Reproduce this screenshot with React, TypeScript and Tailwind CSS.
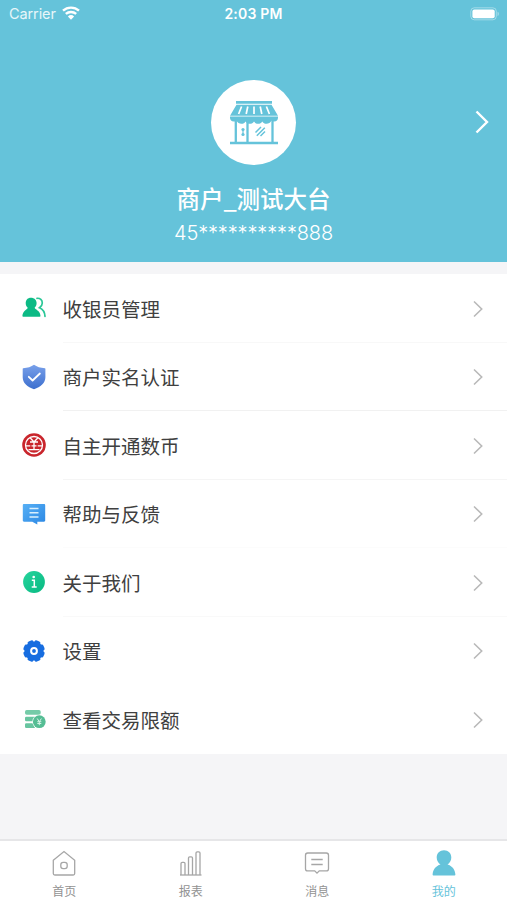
import type { ReactNode } from 'react';

const CashierIcon = () => (
  <svg viewBox="0 0 24 24" className="size-6">
    <path
      d="M8.900 1.700c3.300 0 5.700 2.200 5.700 5.300 0 2-.7 3.700-2 4.800.2 1.600 5.600 2.700 5.900 8.200 0 .5-.3.800-.8.800H1.200c-.5 0-.8-.3-.8-.8.2-5.200 5.100-6.500 5.300-8.200-1.300-1.100-2-2.800-2-4.800 0-3.100 2.100-5.300 5.200-5.300Z"
      fill="#0cba85"
    />
    <path
      d="M15 2.300c3.100-.3 5.300 1.700 5.300 4.700 0 1.900-1.200 3.600-2.800 4.700 3.600 1.500 5.300 4.500 5.500 8.700"
      fill="none"
      stroke="#2bc797"
      strokeWidth="1.700"
      strokeLinecap="round"
    />
  </svg>
);

const ShieldIcon = () => (
  <svg viewBox="0 0 24 26" className="h-[26px] w-6">
    <defs>
      <linearGradient id="shield" x1="0" y1="0" x2="0" y2="1">
        <stop offset="0" stopColor="#78a0ea" />
        <stop offset="1" stopColor="#3d6fce" />
      </linearGradient>
    </defs>
    <path
      d="M12 .8c2.800 2 6.500 3.300 10.900 3.400.3 0 .5.3.5.6v8.500c0 5.700-4.800 9.700-11.400 12C5.400 23 .7 19 .7 13.300V4.800c0-.3.2-.6.5-.6C5.500 4.100 9.200 2.800 12 .8Z"
      fill="url(#shield)"
    />
    <path
      d="m6.800 12.800 3.800 3.700 7.300-7"
      fill="none"
      stroke="#fff"
      strokeWidth="1.800"
      strokeLinecap="round"
      strokeLinejoin="round"
    />
  </svg>
);

const CoinIcon = () => (
  <svg viewBox="0 0 24 24" className="size-6" fill="none" stroke="#fff" strokeWidth="1.300">
    <circle cx="12" cy="12" r="11.800" fill="#c9252c" stroke="none" />
    <circle cx="12" cy="12" r="8.500" />
    <path d="m8.300 5 3.700 4 3.700-4M8 9h8M3.800 12.800h4.500M15.700 12.800h4.500M9.500 12.800h5M12 9v7.500M6.500 16.700h11" />
  </svg>
);

const FeedbackIcon = () => (
  <svg viewBox="0 0 24 24" className="size-6">
    <defs>
      <linearGradient id="feedback" x1="0" y1="0" x2="1" y2="1">
        <stop offset="0" stopColor="#57b0f5" />
        <stop offset="1" stopColor="#2b87e4" />
      </linearGradient>
    </defs>
    <path
      d="M2 2h20c.7 0 1.200.5 1.200 1.200v15.300c0 .7-.5 1.200-1.200 1.200h-6.700v2.700l-5-2.700H2c-.7 0-1.200-.5-1.200-1.200V3.200C.8 2.500 1.300 2 2 2Z"
      fill="url(#feedback)"
    />
    <path d="M7.500 6.500h9M7.500 10.700h9M7.500 15h9" stroke="#d9effd" strokeWidth="1.600" />
  </svg>
);

const AboutIcon = () => (
  <svg viewBox="0 0 24 24" className="size-6">
    <defs>
      <linearGradient id="about" x1="0" y1="0" x2="1" y2="1">
        <stop offset="0" stopColor="#26d49c" />
        <stop offset="1" stopColor="#08b982" />
      </linearGradient>
    </defs>
    <circle cx="12" cy="12" r="10.900" fill="url(#about)" />
    <circle cx="11.700" cy="7" r="1.300" fill="#fff" />
    <path d="M9.800 10.300h2.500v6.500M9.700 17h5" fill="none" stroke="#fff" strokeWidth="1.500" />
  </svg>
);

// each bar spans the whole gear, so four of them give eight teeth
const SettingsIcon = () => (
  <svg viewBox="0 0 24 24" className="size-6" fill="#176de0">
    <circle cx="12" cy="12" r="9.500" />
    {[22.5, 67.5, 112.5, 157.5].map((angle) => (
      <rect
        key={angle}
        x="8.900"
        y="1.200"
        width="6.200"
        height="21.600"
        rx="1.800"
        transform={`rotate(${angle} 12 12)`}
      />
    ))}
    <circle cx="12" cy="12" r="2.900" stroke="#fff" strokeWidth="2" />
  </svg>
);

const LimitIcon = () => (
  <svg viewBox="0 0 24 24" className="size-6">
    <rect x="3" y="3" width="15.700" height="4.800" rx="1.700" fill="#75cba8" />
    <path d="M4.200 9.700h9.300L11 14.200H4.200A1.200 1.200 0 0 1 3 13v-2.100a1.200 1.200 0 0 1 1.200-1.200Z" fill="#68c5a0" />
    <path d="M4.200 16.200H11l2 4.800H4.200A1.200 1.200 0 0 1 3 19.800v-2.400a1.200 1.200 0 0 1 1.200-1.200Z" fill="#68c5a0" />
    <circle cx="17.300" cy="14.700" r="7" fill="#fff" />
    <circle cx="17.300" cy="14.700" r="6.400" fill="#55bd94" />
    <path
      d="m15.200 11.500 2.100 3.200 2.100-3.200M17.300 14.700v3.500M15.300 14.700h4M15.300 16.500h4"
      fill="none"
      stroke="#d7f2e7"
      strokeWidth="1"
    />
  </svg>
);

const ShopLogo = () => (
  <svg viewBox="0 0 50 44" className="mt-0.5 h-11 w-[50px]" fill="#65c3da">
    <path d="M7 0h36v2.700H7zM7.500 3.800h35L49 14.700H1Z" />
    <path d="M1 15.600h48v1.200c0 2.200-1.500 3.700-3.800 3.700-1.500 0-2.200-.4-2.700-1-1 2.200-3 3.200-4.900 3.200-2 0-3.400-.9-4.300-2.300-.9 1.400-2.300 2.300-4.200 2.300s-3.300-.9-4.100-2.300c-.9 1.400-2.300 2.300-4.200 2.300s-3.300-.9-4.200-2.300c-.9 1.400-2.300 2.300-4.200 2.300-2 0-3.900-1-4.900-3.200-.5.6-1.200 1-2.700 1C2.500 20.500 1 19 1 16.800Z" />
    <path
      d="m12.600 5.500-3 7.500M18.800 5.500l-1.600 7.500M25 5.500V13M31.200 5.500l1.600 7.500M37.400 5.500l3 7.500"
      stroke="#fff"
      strokeWidth="1.700"
    />
    <path
      d="M6.800 19v23M18.500 19v23M43.500 19v23M1 42h48"
      stroke="#65c3da"
      strokeWidth="2.300"
    />
    <path d="M14 28.500v5" stroke="#65c3da" strokeWidth="1.200" />
    <circle cx="14" cy="28.500" r="1.600" />
    <circle cx="14" cy="33.500" r="1.600" />
    <path
      d="m26.500 31.500 5.500-5.500M27.800 34.800l8-8M31.500 35l4.500-4.500"
      stroke="#65c3da"
      strokeWidth="1.500"
    />
  </svg>
);

interface MenuItem {
  label: string;
  icon: ReactNode;
  line: string;
}

const menu: MenuItem[] = [
  { label: '收银员管理', icon: <CashierIcon />, line: 'border-[#f8f8f8]' },
  { label: '商户实名认证', icon: <ShieldIcon />, line: 'border-[#f1f1f1]' },
  { label: '自主开通数币', icon: <CoinIcon />, line: 'border-[#f5f5f5]' },
  { label: '帮助与反馈', icon: <FeedbackIcon />, line: 'border-[#fcfcfc]' },
  { label: '关于我们', icon: <AboutIcon />, line: 'border-[#f9f9f9]' },
  { label: '设置', icon: <SettingsIcon />, line: 'border-transparent' },
  { label: '查看交易限额', icon: <LimitIcon />, line: 'border-transparent' },
];

const tabs = [
  {
    label: '首页',
    icon: (
      <>
        <path d="M2.300 10.200 13 1.500l10.700 8.700v13.300c0 .9-.6 1.500-1.500 1.500H3.800c-.9 0-1.500-.6-1.500-1.500Z" />
        <rect x="9.800" y="12.300" width="6.400" height="6.400" rx="2.400" />
      </>
    ),
  },
  {
    label: '报表',
    icon: (
      <>
        <path d="M3 25V13.500a1.200 1.200 0 0 1 1.200-1.200h1.600a1.200 1.200 0 0 1 1.200 1.200V25M10.500 25V8a1.200 1.200 0 0 1 1.200-1.200h1.600A1.200 1.200 0 0 1 14.500 8v17M18 25V3a1.200 1.200 0 0 1 1.200-1.200h1.600A1.200 1.200 0 0 1 22 3v22" />
        <path d="M2 25h21.500" />
      </>
    ),
  },
  {
    label: '消息',
    icon: (
      <>
        <path d="M3.700 3h18.600c1.300 0 2.200.9 2.200 2.200v13.500c0 1.300-.9 2.200-2.200 2.200h-7L13 23.200l-2.300-2.300h-7c-1.300 0-2.200-.9-2.200-2.200V5.200C1.500 3.900 2.400 3 3.700 3Z" />
        <path d="M7.300 9.500h11.400M7.300 14.500h11.400" />
      </>
    ),
  },
  {
    label: '我的',
    active: true,
    icon: (
      <path
        d="M13 .3c4.200 0 7.300 3.100 7.300 7.200 0 3.100-1.500 5.600-3.800 6.900 4.600 1.400 7.500 4.900 7.900 10.100 0 .5-.3.900-.8.900H2.400c-.5 0-.8-.4-.8-.9.400-5.200 3.300-8.700 7.900-10.100-2.300-1.300-3.800-3.800-3.800-6.900C5.700 3.400 8.800.3 13 .3Z"
        fill="#65c3da"
        stroke="none"
      />
    ),
  },
];

function StatusBar() {
  return (
    <div className="grid h-7 grid-cols-3 items-center pr-[7px] pl-[9px] font-['Inter']">
      <div className="flex items-center gap-[6px]">
        <span className="text-[14.5px] tracking-[-0.1px] text-white/85">Carrier</span>
        <svg viewBox="0 0 18 14" className="mb-0.5 h-3.5 w-[18px]" fill="none" stroke="#fff">
          <path d="M1 4.700a12 12 0 0 1 16 0M3.800 7.900a8 8 0 0 1 10.400 0" strokeWidth="2.400" />
          <path d="M9 13.700 5.900 10.500a4.600 4.600 0 0 1 6.200 0Z" fill="#fff" stroke="none" />
        </svg>
      </div>
      <div className="pr-0.5 pb-0.5 text-center text-[14px] font-semibold tracking-[0.2px] whitespace-nowrap">
        2:03 PM
      </div>
      <svg viewBox="0 0 30 14" className="h-3.5 w-[30px] justify-self-end">
        <rect x=".8" y=".8" width="25.500" height="12" rx="3.500" fill="none" stroke="#fff" strokeOpacity=".4" />
        <rect x="2.400" y="2.400" width="22.300" height="8.800" rx="2" fill="#fff" />
        <path d="M27.600 4.700c1.500.5 1.500 3.700 0 4.200Z" fill="#fff" fillOpacity=".5" />
      </svg>
    </div>
  );
}

export default function App() {
  return (
    <div className="flex h-[900px] w-[507px] flex-col overflow-hidden bg-[#f5f5f7] font-['Noto_Sans_CJK_SC',sans-serif]">
      <header className="h-[262px] shrink-0 bg-[#65c3da] text-white">
        <StatusBar />
        <div className="mt-[51.5px] grid grid-cols-[1fr_auto_1fr] items-center">
          <div className="col-start-2 flex size-[85px] items-center justify-center rounded-full bg-white">
            <ShopLogo />
          </div>
          <svg
            viewBox="0 0 14 24"
            className="mr-[18px] h-6 w-3.5 justify-self-end"
            fill="none"
            stroke="#fff"
            strokeWidth="2.400"
          >
            <path d="m1.500 1.500 10.500 10.500L1.500 22.500" />
          </svg>
        </div>
        <h1 className="mt-4 text-center text-[23.5px] leading-[34px] font-medium">商户_测试大台</h1>
        <p className="mt-1.5 text-center font-['Inter'] text-[20px] leading-6 font-light tracking-[-0.15px]">
          45**********888
        </p>
      </header>

      <main className="mt-3 bg-white">
        {menu.map((item) => (
          <div key={item.label} className="flex h-[68.5px] items-center pl-[22px]">
            <div className="flex w-6 shrink-0 justify-center">{item.icon}</div>
            <div className={`ml-[16.5px] flex h-full flex-1 items-center justify-between border-b pt-[1.8px] pr-6 ${item.line}`}>
              <span className="text-[19.5px] leading-7 text-[#404040]">{item.label}</span>
              <svg viewBox="0 0 10 18" className="h-[18px] w-2.5" fill="none" stroke="#b9b9b9" strokeWidth="1.600">
                <path d="m1 1.500 7.700 7.500L1 16.500" />
              </svg>
            </div>
          </div>
        ))}
      </main>

      <nav className="mt-auto grid h-[61px] shrink-0 grid-cols-4 border-t-2 border-[#e6e6e8] bg-white pl-px">
        {tabs.map((tab) => (
          <div
            key={tab.label}
            className={`flex flex-col items-center pt-[9px] ${tab.active ? 'text-[#65c3da]' : 'text-[#929292]'}`}
          >
            <svg viewBox="0 0 26 26" className="size-[26px]" fill="none" stroke="#a6a6a6" strokeWidth="1.300">
              {tab.icon}
            </svg>
            <span className="mt-1.5 text-[12px] leading-[18px]">{tab.label}</span>
          </div>
        ))}
      </nav>
    </div>
  );
}
